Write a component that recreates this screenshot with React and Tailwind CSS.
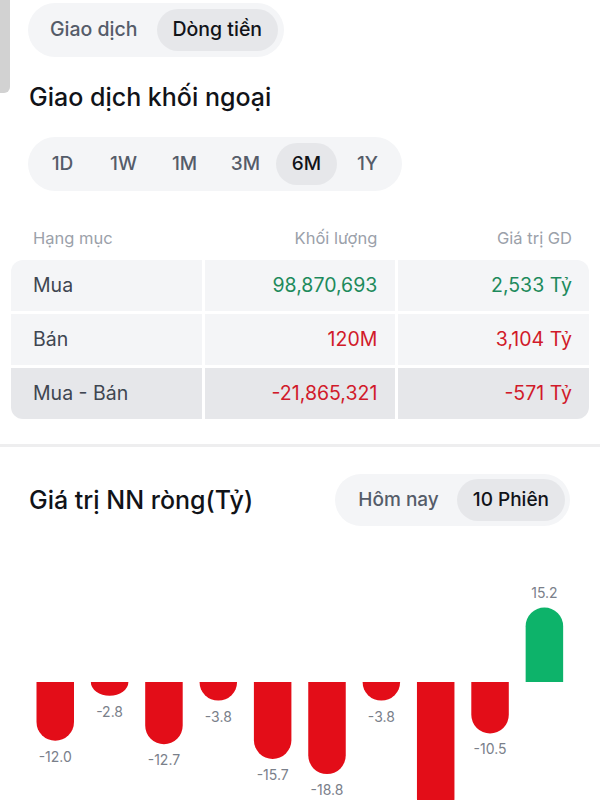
import React from 'react';

// last value label of bar 8 sits below the fold, so it is not drawn
const bars = [
  { v: -12.0 }, { v: -2.8 }, { v: -12.7 }, { v: -3.8 }, { v: -15.7 },
  { v: -18.8 }, { v: -3.8 }, { v: -27.6, hideLabel: true }, { v: -10.5 }, { v: 15.2 },
];

function NetChart() {
  const base = 156;
  const scale = 4.9;
  const w = 37.5;
  return (
    <svg width="600" height="274" viewBox="0 0 600 274" className="block">
      {bars.map((b, i) => {
        const x = 36.5 + i * 54.35;
        const h = Math.abs(b.v) * scale;
        const rx = w / 2;
        const ry = Math.min(rx, h);
        const cx = x + w / 2;
        if (b.v < 0) {
          const d = `M${x} ${base} V${base + h - ry} A${rx} ${ry} 0 0 0 ${x + w} ${base + h - ry} V${base} Z`;
          return (
            <g key={i}>
              <path d={d} fill="#e30d18" />
              {!b.hideLabel && (
                <text x={cx} y={base + h + 21} textAnchor="middle" fontSize="14" fill="#7a808a" fontFamily="Inter, sans-serif">
                  {b.v.toFixed(1)}
                </text>
              )}
            </g>
          );
        }
        const d = `M${x} ${base} V${base - h + ry} A${rx} ${ry} 0 0 1 ${x + w} ${base - h + ry} V${base} Z`;
        return (
          <g key={i}>
            <path d={d} fill="#0db36a" />
            <text x={cx} y={base - h - 10} textAnchor="middle" fontSize="14" fill="#7a808a" fontFamily="Inter, sans-serif">
              {b.v.toFixed(1)}
            </text>
          </g>
        );
      })}
    </svg>
  );
}

export default function App() {
  const rows = [
    { label: 'Mua', vol: '98,870,693', val: '2,533 Tỷ', color: 'text-[#1d8a5c]', bg: 'bg-[#f4f5f7]' },
    { label: 'Bán', vol: '120M', val: '3,104 Tỷ', color: 'text-[#d11a2a]', bg: 'bg-[#f4f5f7]' },
    { label: 'Mua - Bán', vol: '-21,865,321', val: '-571 Tỷ', color: 'text-[#d11a2a]', bg: 'bg-[#e6e7ea]' },
  ];

  return (
    <div className="relative w-[600px] h-[800px] overflow-hidden bg-white font-['Inter',sans-serif]">
      {/* left edge bar */}
      <div className="absolute left-0 top-0 w-[10px] h-[93px] bg-[#d2d2d2] rounded-br-[6px]" />

      <div className="pt-[3px] pl-[28px]">
        <div className="inline-flex items-center rounded-full bg-[#f4f5f7] p-[6px] gap-[3px]">
          <div className="h-[42px] px-[16px] flex items-center rounded-full text-[19.5px] font-medium text-[#555c69]">Giao dịch</div>
          <div className="h-[42px] px-[16px] flex items-center rounded-full text-[19.5px] font-medium bg-[#e6e7ea] text-[#111318]">Dòng tiền</div>
        </div>
      </div>

      <h1 className="mt-[25px] pl-[29px] text-[25px] leading-[30px] font-medium text-[#111318]">
        Giao dịch khối ngoại
      </h1>

      <div className="mt-[25px] pl-[28px]">
        <div className="inline-flex items-center rounded-full bg-[#f4f5f7] px-[4px] py-[6px]">
          {['1D', '1W', '1M', '3M', '6M', '1Y'].map((p) => (
            <div
              key={p}
              className={`w-[61px] h-[42px] flex items-center justify-center rounded-full text-[19px] font-medium ${
                p === '6M' ? 'bg-[#e6e7ea] text-[#111318]' : 'text-[#555c69]'
              }`}
            >
              {p}
            </div>
          ))}
        </div>
      </div>

      {/* table header */}
      <div className="mt-[37px] mx-[11px] grid grid-cols-3 gap-[3px] text-[16.5px] leading-[20px] text-[#9ba1aa]">
        <div className="pl-[22px]">Hạng mục</div>
        <div className="pr-[18px] text-right">Khối lượng</div>
        <div className="pr-[17px] text-right">Giá trị GD</div>
      </div>

      {/* table */}
      <div className="mt-[12px] mx-[11px] rounded-[12px] overflow-hidden flex flex-col gap-[3px]">
        {rows.map((r) => (
          <div key={r.label} className="grid grid-cols-3 gap-[3px] h-[51px] text-[19.5px]">
            <div className={`${r.bg} flex items-center pl-[22px] text-[#3f4651]`}>{r.label}</div>
            <div className={`${r.bg} flex items-center justify-end pr-[18px] ${r.color}`}>{r.vol}</div>
            <div className={`${r.bg} flex items-center justify-end pr-[17px] ${r.color}`}>{r.val}</div>
          </div>
        ))}
      </div>

      <div className="mt-[25px] h-[3px] bg-[#eeeeef]" />

      {/* net value section */}
      <div className="mt-[27px] flex items-center justify-between pl-[29px] pr-[30px]">
        <h2 className="text-[25px] leading-[30px] font-medium text-[#111318]">Giá trị NN ròng(Tỷ)</h2>
        <div className="inline-flex items-center rounded-full bg-[#f4f5f7] p-[5px]">
          <div className="h-[42px] px-[18px] flex items-center rounded-full text-[19px] font-medium text-[#555c69]">Hôm nay</div>
          <div className="h-[42px] px-[16px] flex items-center rounded-full text-[19px] font-medium bg-[#e6e7ea] text-[#111318]">10 Phiên</div>
        </div>
      </div>

      <NetChart />
    </div>
  );
}
